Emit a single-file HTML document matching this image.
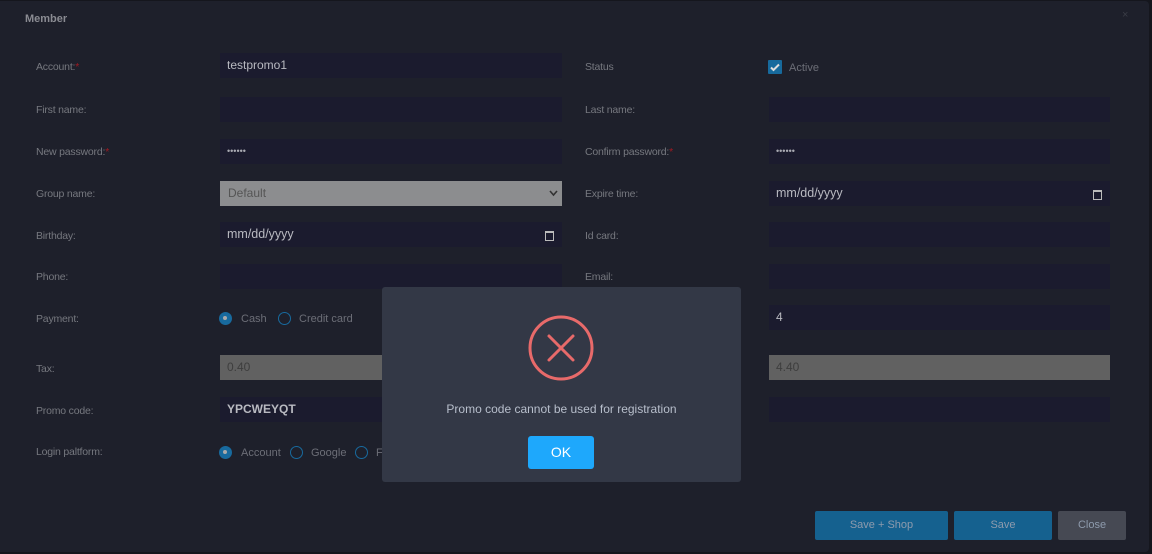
<!DOCTYPE html>
<html><head><style>
body{margin:0;width:1152px;height:554px;background:#15161d;overflow:hidden;font-family:"Liberation Sans",sans-serif;position:relative}
.frame{position:absolute;left:0;top:1px;width:1149px;height:551px;background:#1e202b;border-radius:0 4px 4px 0}
.a{position:absolute}
.lbl{position:absolute;font-size:10.5px;color:#76787f;letter-spacing:-0.2px}
.req{color:#a01a22}
.in{position:absolute;height:25px;background:#1b1b2e;color:#a9aab2;font-size:12px;line-height:25px;padding-left:7px;box-sizing:border-box}
.grey{background:#616161;color:#3e3e3e}
.rad{position:absolute;width:13px;height:13px;border:1.5px solid #186a9e;border-radius:50%;box-sizing:border-box}
.rad.on{background:#186a9e}
.rad.on::after{content:"";position:absolute;left:3px;top:3px;width:4px;height:4px;border-radius:50%;background:#aaa}
.rl{position:absolute;font-size:11px;color:#6c6e77}
.btn{position:absolute;height:29px;line-height:29px;text-align:center;font-size:11px;color:#8e9bad;border-radius:2px;background:#15618f}
</style></head><body>
<div class="frame"></div>
<div class="a" style="left:25px;top:13px;font-size:11px;font-weight:bold;color:#8a8b92">Member</div>
<div class="a" style="left:1122px;top:9px;font-size:11px;color:#3a3c46">×</div>

<div class="lbl" style="left:36px;top:61px">Account:<span class="req">*</span></div>
<div class="in" style="left:220px;top:53px;width:342px;color:#b9bac1">testpromo1</div>
<div class="lbl" style="left:36px;top:104px">First name:</div>
<div class="in" style="left:220px;top:97px;width:342px"></div>
<div class="lbl" style="left:36px;top:146px">New password:<span class="req">*</span></div>
<div class="in" style="left:220px;top:139px;width:342px;font-size:9px">••••••</div>
<div class="lbl" style="left:36px;top:188px">Group name:</div>
<div class="in" style="left:220px;top:181px;width:342px;background:#8c8d8f;color:#555;padding-left:8px">Default<svg style="position:absolute;right:4px;top:9px" width="9" height="7"><path d="M1 1l3.5 4L8 1" stroke="#333" stroke-width="1.6" fill="none"/></svg></div>
<div class="lbl" style="left:36px;top:230px">Birthday:</div>
<div class="in" style="left:220px;top:222px;width:342px;font-size:12.5px;color:#b9bac1">mm/dd/yyyy<span style="position:absolute;right:8px;top:9px;width:7px;height:7px;border:1px solid #bbb;border-top-width:2px"></span></div>
<div class="lbl" style="left:36px;top:271px">Phone:</div>
<div class="in" style="left:220px;top:264px;width:342px"></div>
<div class="lbl" style="left:36px;top:313px">Payment:</div>
<div class="rad on" style="left:219px;top:312px"></div><div class="rl" style="left:241px;top:313px">Cash</div>
<div class="rad" style="left:278px;top:312px"></div><div class="rl" style="left:299px;top:313px">Credit card</div>
<div class="lbl" style="left:36px;top:363px">Tax:</div>
<div class="in grey" style="left:220px;top:355px;width:342px">0.40</div>
<div class="lbl" style="left:36px;top:405px">Promo code:</div>
<div class="in" style="left:220px;top:397px;width:342px;font-weight:bold;color:#b9bac1">YPCWEYQT</div>
<div class="lbl" style="left:36px;top:446px">Login paltform:</div>
<div class="rad on" style="left:219px;top:446px"></div><div class="rl" style="left:241px;top:447px">Account</div>
<div class="rad" style="left:290px;top:446px"></div><div class="rl" style="left:311px;top:447px">Google</div>
<div class="rad" style="left:355px;top:446px"></div><div class="rl" style="left:376px;top:447px">F</div>

<div class="lbl" style="left:585px;top:61px">Status</div>
<div class="a" style="left:768px;top:60px;width:14px;height:14px;background:#176a9d;border-radius:1px"><svg width="14" height="14"><path d="M3 7.5l2.5 2.5L11 4.5" stroke="#ddd" stroke-width="2" fill="none"/></svg></div>
<div class="rl" style="left:789px;top:62px">Active</div>
<div class="lbl" style="left:585px;top:104px">Last name:</div>
<div class="in" style="left:769px;top:97px;width:341px"></div>
<div class="lbl" style="left:585px;top:146px">Confirm password:<span class="req">*</span></div>
<div class="in" style="left:769px;top:139px;width:341px;font-size:9px">••••••</div>
<div class="lbl" style="left:585px;top:188px">Expire time:</div>
<div class="in" style="left:769px;top:181px;width:341px;font-size:12.5px;color:#b9bac1">mm/dd/yyyy<span style="position:absolute;right:8px;top:9px;width:7px;height:7px;border:1px solid #bbb;border-top-width:2px"></span></div>
<div class="lbl" style="left:585px;top:230px">Id card:</div>
<div class="in" style="left:769px;top:222px;width:341px"></div>
<div class="lbl" style="left:585px;top:271px">Email:</div>
<div class="in" style="left:769px;top:264px;width:341px"></div>
<div class="in" style="left:769px;top:305px;width:341px;color:#b9bac1">4</div>
<div class="in grey" style="left:769px;top:355px;width:341px">4.40</div>
<div class="in" style="left:769px;top:397px;width:341px"></div>

<div class="btn" style="left:815px;top:511px;width:133px">Save + Shop</div>
<div class="btn" style="left:954px;top:511px;width:98px">Save</div>
<div class="btn" style="left:1058px;top:511px;width:68px;background:#464953">Close</div>

<div class="a" style="left:382px;top:287px;width:359px;height:195px;background:#333846;border-radius:3px">
<svg class="a" style="left:145px;top:28px" width="68" height="68"><circle cx="34" cy="33" r="31" stroke="#e86a6a" stroke-width="3" fill="none"/><path d="M22 21L46 45M46 21L22 45" stroke="#e86a6a" stroke-width="3" stroke-linecap="round"/></svg>
<div class="a" style="left:0;width:359px;top:115px;text-align:center;font-size:12px;color:#b8bfcc">Promo code cannot be used for registration</div>
<div class="a" style="left:146px;top:149px;width:66px;height:33px;background:#1ea8fc;border-radius:3px;color:#fff;font-size:14px;line-height:33px;text-align:center">OK</div>
</div>
</body></html>
